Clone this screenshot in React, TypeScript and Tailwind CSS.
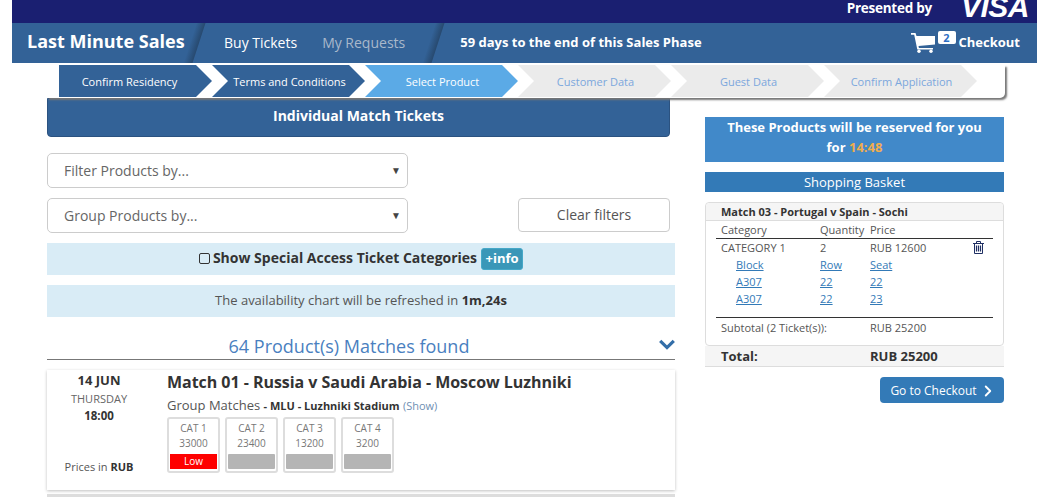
import { ChevronRight } from "lucide-react";

const steps = [
  { label: "Confirm Residency", done: true },
  { label: "Terms and Conditions", done: true },
  { label: "Select Product", current: true },
  { label: "Customer Data" },
  { label: "Guest Data" },
  { label: "Confirm Application" },
];

const cats = [
  { name: "CAT 1", price: "33000", low: true },
  { name: "CAT 2", price: "23400" },
  { name: "CAT 3", price: "13200" },
  { name: "CAT 4", price: "3200" },
];

function NavSlash() {
  return <div className="w-[9px] h-full skew-x-[-18deg] bg-gradient-to-r from-[#336297] to-[#27496f]" />;
}

function SelectBox({ label }: { label: string }) {
  return (
    <div className="w-[361px] h-[35px] border border-[#ccc] rounded-[5px] flex items-center justify-between pl-[16px] pr-[6px] text-[14px] text-[#666]">
      <span>{label}</span>
      <span className="text-[10px] text-[#444]">▼</span>
    </div>
  );
}

function CartIcon() {
  return (
    <svg width="24" height="20" viewBox="0 0 24 20" fill="white" className="shrink-0">
      <path d="M0 0h4.5l1 3H24v8.5L7.5 13l.4 2H22v1.6H6.3L3.2 1.8H0z" />
      <circle cx="8" cy="18.3" r="1.7" />
      <circle cx="20" cy="18.3" r="1.7" />
    </svg>
  );
}

function TrashIcon() {
  return (
    <svg width="11" height="13" viewBox="0 0 11 13" fill="none" stroke="#1f2f63" strokeWidth="1" className="shrink-0">
      <path d="M0 2.5h11M3.5 2.5V.5h4v2M1.5 2.5v10h8v-10" />
      <path d="M3.5 4.5v6M5.5 4.5v6M7.5 4.5v6" strokeWidth="1.2" />
    </svg>
  );
}

export default function App() {
  return (
    <div className="w-[1037px] h-[497px] overflow-hidden bg-white pl-[12px] text-[#333] font-['Open_Sans',sans-serif]">
      <div className="h-[23px] bg-[#1a1f71] flex justify-end overflow-hidden text-white">
        <span className="text-[13.5px] font-bold leading-[17px] mr-[29px] tracking-[-0.25px]">Presented by</span>
        <span className="font-['Liberation_Sans',sans-serif] italic font-bold text-[30px] leading-[14px] mr-[8px] tracking-[-0.5px]">VISA</span>
      </div>

      <div className="h-[40px] bg-[#336297] flex items-center text-white">
        <span className="ml-[15px] text-[18px] font-bold w-[163px] whitespace-nowrap -mt-[4px]">Last Minute Sales</span>
        <NavSlash />
        <span className="ml-[25px] text-[14px] -mt-[1px]">Buy Tickets</span>
        <span className="ml-[25px] text-[14px] text-[#a9b8cb] -mt-[1px]">My Requests</span>
        <div className="ml-[24px] h-full"><NavSlash /></div>
        <span className="ml-[22px] text-[13px] font-bold -mt-[1px]">59 days to the end of this Sales Phase</span>
        <div className="ml-auto mr-[17px] flex items-center">
          <CartIcon />
          <span className="mb-[6px] ml-[3px] w-[18px] h-[13px] bg-white rounded-[2px] text-[#2f6fc4] text-[11px] font-bold leading-[13px] text-center -mt-[6px]">2</span>
          <span className="ml-[3px] text-[13px] font-bold">Checkout</span>
        </div>
      </div>

      <div className="ml-[35px] mt-[2px] w-[958px] h-[33px] bg-white rounded-br-[5px] shadow-[2px_2px_2px_#777] flex pl-[12px] relative z-10">
        {steps.map((step, i) => (
          <div
            key={step.label}
            className={
              "w-[153px] h-[32px] flex items-center justify-center text-[11px] pt-[2px] " +
              (i === 0
                ? "pr-[12px] [clip-path:polygon(0_0,137px_0,153px_16px,137px_32px,0_32px)] "
                : "pl-[2px] [clip-path:polygon(0_0,137px_0,153px_16px,137px_32px,0_32px,16px_16px)] ") +
              (step.done
                ? "bg-[#336297] text-white"
                : step.current
                  ? "bg-[#5baae6] text-white"
                  : "bg-[#ebebeb] text-[#7ba7dd]")
            }
          >
            {step.label}
          </div>
        ))}
      </div>

      <div className="ml-[35px] flex">
        <div className="w-[628px]">
          <div className="w-[623px] h-[39px] bg-[#336297] border border-[#2b5280] rounded-b-[4px] flex items-center justify-center text-white text-[14px] font-bold pb-[4px]">
            Individual Match Tickets
          </div>

          <div className="mt-[16px]">
            <SelectBox label="Filter Products by..." />
          </div>
          <div className="mt-[10px] flex items-start">
            <SelectBox label="Group Products by..." />
            <div className="ml-[110px] w-[152px] h-[34px] border border-[#ccc] rounded-[4px] flex items-center justify-center text-[14px] text-[#555] pb-[1px]">
              Clear filters
            </div>
          </div>

          <div className="mt-[10px] h-[32px] bg-[#d9ecf6] flex items-center justify-center text-[14px] font-bold">
            <span className="w-[11px] h-[11px] border border-[#333] rounded-[2px] mr-[3px] -mt-[2px]" />
            <span className="-mt-[3px]">Show Special Access Ticket Categories</span>
            <span className="ml-[4px] w-[42px] h-[22px] bg-[#3a97b8] border border-[#46a8c8] rounded-[3px] text-white text-[13px] flex items-center justify-center">
              +info
            </span>
          </div>
          <div className="mt-[10px] h-[32px] bg-[#d9ecf6] flex items-center justify-center text-[13px] text-[#555] whitespace-pre">
            The availability chart will be refreshed in <b className="text-[#333]">1m,24s</b>
          </div>

          <div className="mt-[13px] h-[30px] border-b border-[#777] flex items-start justify-center relative text-[18px] text-[#4a7fc0] leading-[28px] pt-[2px]">
            <span className="pr-[24px]">64 Product(s) Matches found</span>
            <svg width="16" height="11" viewBox="0 0 16 11" fill="none" stroke="#336ea8" strokeWidth="3.2" className="absolute right-0 top-[9px]">
              <path d="M1.2 1.8 8 8.6l6.8-6.8" />
            </svg>
          </div>

          <div className="mt-[10px] h-[120px] shadow-[0_1px_3px_rgba(0,0,0,0.25)] flex">
            <div className="w-[104px] shrink-0 flex flex-col items-center pt-[1px]">
              <span className="text-[13px] font-bold leading-[18px] text-[#333]">14 JUN</span>
              <span className="text-[11px] leading-[18px] mt-[1px] text-[#666]">THURSDAY</span>
              <span className="text-[11.5px] font-bold leading-[16px] text-[#333]">18:00</span>
              <span className="text-[11px] text-[#555] mt-[35px] whitespace-pre">
                Prices in <b className="text-[#333]">RUB</b>
              </span>
            </div>
            <div className="ml-[16px] flex flex-col">
              <span className="text-[16px] font-bold leading-[22px] mt-[1px] text-[#333] whitespace-nowrap tracking-[-0.04px]">
                Match 01 - Russia v Saudi Arabia - Moscow Luzhniki
              </span>
              <div className="mt-[3px] leading-[18px] text-[13px] text-[#555] whitespace-pre">
                Group Matches <b className="text-[11px] text-[#333]">- MLU - Luzhniki Stadium</b>{" "}
                <span className="text-[11px] text-[#6f8fb3]">(Show)</span>
              </div>
              <div className="mt-[2px] flex gap-[5px]">
                {cats.map((c) => (
                  <div key={c.name} className="w-[53px] h-[56px] border-2 border-[#ddd] rounded-[3px] flex flex-col items-center text-[10px] leading-[15px] text-[#777] pt-[2px]">
                    <span>{c.name}</span>
                    <span>{c.price}</span>
                    <div className={"w-[47px] h-[15px] mt-[3px] text-center text-white text-[10px] " + (c.low ? "bg-[#fe0000]" : "bg-[#b5b5b5] rounded-[1px]")}>
                      {c.low ? "Low" : ""}
                    </div>
                  </div>
                ))}
              </div>
            </div>
          </div>
          <div className="mt-[4px] h-[10px] bg-[#ddd]" />
        </div>

        <div className="ml-[30px] w-[299px] pt-[19px] text-[11px]">
          <div className="h-[45px] bg-[#4189c9] text-white text-[13px] font-bold leading-[20px] text-center">
            These Products will be reserved for you
            <br />
            for <span className="text-[#f0ad4e]">14:48</span>
          </div>
          <div className="mt-[10px] h-[20px] bg-[#337ab7] text-white text-[13px] leading-[20px] text-center">Shopping Basket</div>

          <div className="mt-[10px] h-[144px] border border-[#ddd] rounded-[4px] text-[#555]">
            <div className="h-[18px] bg-[#f5f5f5] border-b border-[#ddd] pl-[15px] font-bold leading-[17px] text-[#333] rounded-t-[4px]">
              Match 03 - Portugal v Spain - Sochi
            </div>
            <div className="mx-[10px]">
              <div className="grid grid-cols-[99px_50px_1fr] pl-[5px] h-[18px] leading-[17px] border-b border-[#333]">
                <span>Category</span>
                <span>Quantity</span>
                <span>Price</span>
              </div>
              <div className="grid grid-cols-[99px_50px_1fr] pl-[5px] leading-[17px] text-[#555]">
                <span>CATEGORY 1</span>
                <span>2</span>
                <span className="flex justify-between pr-[9px]">
                  RUB 12600
                  <span className="mt-[2px]"><TrashIcon /></span>
                </span>
                {["Block", "Row", "Seat", "A307", "22", "22", "A307", "22", "23"].map((t, i) => (
                  <a key={i} className={"underline text-[#337ab7] " + (i % 3 === 0 ? "pl-[15px]" : "")}>
                    {t}
                  </a>
                ))}
              </div>
              <div className="mt-[10px] border-t border-[#333] grid grid-cols-[149px_1fr] pl-[5px] leading-[19px]">
                <span>Subtotal (2 Ticket(s)):</span>
                <span>RUB 25200</span>
              </div>
            </div>
          </div>

          <div className="h-[21px] bg-[#f5f5f5] border-b border-[#ddd] grid grid-cols-[149px_1fr] px-[16px] text-[13px] font-bold leading-[20px]">
            <span>Total:</span>
            <span>RUB 25200</span>
          </div>

          <div className="mt-[10px] flex justify-end">
            <div className="w-[124px] h-[26px] bg-[#337ab7] rounded-[4px] text-white text-[12px] flex items-center justify-center gap-[2px] pt-[1px] pl-[3px]">
              Go to Checkout
              <ChevronRight size={18} strokeWidth={2.5} />
            </div>
          </div>
        </div>
      </div>
    </div>
  );
}
